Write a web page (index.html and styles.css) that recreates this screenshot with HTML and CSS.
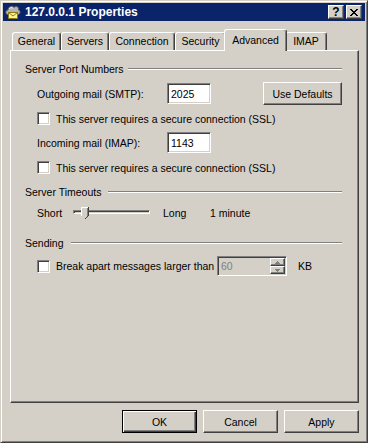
FILE: index.html
```html
<!DOCTYPE html>
<html>
<head>
<meta charset="utf-8">
<title>127.0.0.1 Properties</title>
<link rel="stylesheet" href="styles.css">
</head>
<body>
<div class="window">
  <div class="titlebar">
    <svg class="app-icon" width="16" height="16" viewBox="0 0 16 16">
      <path d="M2.5 10.5 C0 10 0.5 6 3 6 C3 2.5 7.5 1 9 3.5 C10.5 1.5 14.5 2.5 13.5 6 C16 6.5 15.5 10.5 13 10.5 Z" fill="#b4b4b4" stroke="#5a5a5a"/>
      <path d="M4 5 C5 3.5 7 3 8 4.5" fill="none" stroke="#e8e8e8"/>
      <rect x="3.5" y="8.5" width="9" height="6" fill="#fff48c" stroke="#8c7a14"/>
      <path d="M3.5 8.5 L8 12 L12.5 8.5" fill="none" stroke="#8c7a14"/>
    </svg>
    <span class="title">127.0.0.1 Properties</span>
    <div class="title-btns">
      <div class="tbtn help">?</div>
      <div class="tbtn close">
        <svg width="8" height="7" viewBox="0 0 8 7" shape-rendering="crispEdges">
          <path d="M0 0h2v1h-2zM6 0h2v1h-2zM1 1h2v1h-2zM5 1h2v1h-2zM2 2h4v1h-4zM3 3h2v1h-2zM2 4h4v1h-4zM1 5h2v1h-2zM5 5h2v1h-2zM0 6h2v1h-2zM6 6h2v1h-2z" fill="#000"/>
        </svg>
      </div>
    </div>
  </div>
  <div class="body">
    <div class="tabs">
      <div class="tab tab-general">General</div>
      <div class="tab tab-servers">Servers</div>
      <div class="tab tab-connection">Connection</div>
      <div class="tab tab-security">Security</div>
      <div class="tab tab-advanced active">Advanced</div>
      <div class="tab tab-imap">IMAP</div>
    </div>
    <div class="panel">
      <div class="group-head"><span>Server Port Numbers</span><div class="etch"></div></div>
      <div class="row row-out">
        <span class="field-label">Outgoing mail (SMTP):</span>
        <div class="textbox">2025</div>
        <div class="button defaults">Use Defaults</div>
      </div>
      <div class="row row-check1">
        <div class="checkbox"></div>
        <span>This server requires a secure connection (SSL)</span>
      </div>
      <div class="row row-in">
        <span class="field-label">Incoming mail (IMAP):</span>
        <div class="textbox">1143</div>
      </div>
      <div class="row row-check2">
        <div class="checkbox"></div>
        <span>This server requires a secure connection (SSL)</span>
      </div>

      <div class="group-head head-timeouts"><span>Server Timeouts</span><div class="etch"></div></div>
      <div class="row row-slider">
        <span class="short-label">Short</span>
        <div class="slider">
          <div class="track"></div>
          <svg class="thumb" width="8" height="12" viewBox="0 0 8 12" shape-rendering="crispEdges">
            <path d="M0 0h8v8l-4 4l-4 -4z" fill="#d4d0c8"/>
            <path d="M0 0h7v1h-6v8h-1z" fill="#fff"/>
            <path d="M7 0h1v9h-1z" fill="#404040"/>
            <path d="M6 1h1v8h-1z" fill="#808080"/>
            <path d="M0 9h1v1h1v1h1v1h1v-1h1v-1h1v-1h1v-1h1v1h-1v1h-1v1h-1v1h-2v-1h-1v-1h-1v-1h-1z" fill="#404040"/>
          </svg>
        </div>
        <span class="long-label">Long</span>
        <span>1 minute</span>
      </div>

      <div class="group-head head-sending"><span>Sending</span><div class="etch"></div></div>
      <div class="row row-spin">
        <div class="checkbox"></div>
        <span class="break-label">Break apart messages larger than</span>
        <div class="spinbox">
          <span class="spin-value">60</span>
          <div class="spin-btns">
            <div class="spin-btn">
              <svg width="5" height="3" viewBox="0 0 5 3" shape-rendering="crispEdges"><path d="M2 0h1v1h1v1h1v1h-5v-1h1v-1h1z" fill="#808080"/></svg>
            </div>
            <div class="spin-btn">
              <svg width="5" height="3" viewBox="0 0 5 3" shape-rendering="crispEdges"><path d="M0 0h5v1h-1v1h-1v1h-1v-1h-1v-1h-1z" fill="#808080"/></svg>
            </div>
          </div>
        </div>
        <span class="kb">KB</span>
      </div>
    </div>
    <div class="footer">
      <div class="button default">OK</div>
      <div class="button">Cancel</div>
      <div class="button">Apply</div>
    </div>
  </div>
</div>
</body>
</html>
```

FILE: styles.css
```css
* { box-sizing: border-box; }
html, body { margin: 0; padding: 0; }
body {
  width: 368px;
  height: 443px;
  overflow: hidden;
  background: #d4d0c8;
  font-family: "Liberation Sans", Arial, sans-serif;
  font-size: 10.5px;
  color: #000;
}

.window {
  width: 368px;
  height: 443px;
  background: #d4d0c8;
  border: 1px solid;
  border-color: #d4d0c8 #404040 #404040 #d4d0c8;
  box-shadow: inset 1px 1px #fff, inset -1px -1px #808080;
  padding: 2px;
  display: flex;
  flex-direction: column;
}

/* title bar */
.titlebar {
  height: 18px;
  flex: none;
  background: #0a246a;
  display: flex;
  align-items: center;
  padding: 0 3px 0 2px;
}
.app-icon { flex: none; display: block; }
.title {
  margin-left: 4px;
  color: #fff;
  font-weight: bold;
  font-size: 12px;
  white-space: nowrap;
}
.title-btns {
  margin-left: auto;
  display: flex;
  gap: 2px;
}
.tbtn {
  width: 16px;
  height: 14px;
  background: #d4d0c8;
  border: 1px solid;
  border-color: #fff #404040 #404040 #fff;
  box-shadow: inset -1px -1px #808080;
  display: flex;
  align-items: center;
  justify-content: center;
}
.help {
  font-weight: bold;
  font-size: 12px;
  line-height: 1;
  padding-bottom: 1px;
}
.close svg { display: block; }

/* body */
.body {
  flex: 1;
  display: flex;
  flex-direction: column;
  padding: 8px 6px 7px 7px;
}

/* tabs */
.tabs {
  height: 21px;
  flex: none;
  display: flex;
  align-items: flex-end;
  padding-left: 2px;
  position: relative;
  z-index: 1;
}
.tab {
  height: 18px;
  border: 1px solid;
  border-color: #fff #404040 transparent #fff;
  border-bottom: 0;
  border-radius: 3px 3px 0 0;
  box-shadow: inset -1px 0 #808080;
  background: #d4d0c8;
  display: flex;
  align-items: center;
  justify-content: center;
  white-space: nowrap;
  padding-bottom: 1px;
}
.tab-general { width: 49px; }
.tab-servers { width: 48px; }
.tab-connection { width: 66px; }
.tab-security { width: 51px; }
.tab-imap { width: 42px; }
.tab.active {
  width: 63px;
  height: 22px;
  margin: 0 -2px -1px;
  position: relative;
  z-index: 2;
  padding-bottom: 2px;
}

/* panel */
.panel {
  flex: 1;
  border: 1px solid;
  border-color: #fff #404040 #404040 #fff;
  box-shadow: inset -1px -1px #808080;
  padding: 11px 16px 0 14px;
  display: flex;
  flex-direction: column;
}

.group-head {
  height: 14px;
  display: flex;
  align-items: center;
  white-space: nowrap;
}
.etch {
  flex: 1;
  height: 2px;
  margin-left: 4px;
  border-top: 1px solid #808080;
  border-bottom: 1px solid #fff;
}
.head-timeouts { margin-top: 11px; }
.head-sending { margin-top: 14px; }
.head-timeouts .etch { margin-left: 7px; }
.head-sending .etch { margin-left: 7px; }

.row {
  display: flex;
  align-items: center;
  margin-left: 12px;
  white-space: nowrap;
}
.row-out { margin-top: 6px; height: 23px; }
.row-check1 { margin-top: 7px; height: 13px; }
.row-in { margin-top: 7px; height: 21px; }
.row-check2 { margin-top: 8px; height: 13px; }
.row-slider { margin-top: 5px; height: 18px; }
.row-spin { margin-top: 6px; height: 20px; }

.field-label { width: 130px; flex: none; }

.textbox {
  width: 44px;
  height: 21px;
  flex: none;
  background: #fff;
  border: 1px solid;
  border-color: #808080 #fff #fff #808080;
  box-shadow: inset 1px 1px #404040, inset -1px -1px #d4d0c8;
  padding: 0 3px;
  display: flex;
  align-items: center;
}

.button {
  background: #d4d0c8;
  border: 1px solid;
  border-color: #fff #404040 #404040 #fff;
  box-shadow: inset -1px -1px #808080;
  display: flex;
  align-items: center;
  justify-content: center;
  white-space: nowrap;
}
.defaults {
  margin-left: 52px;
  width: 82px;
  height: 23px;
}

.checkbox {
  width: 13px;
  height: 13px;
  flex: none;
  background: #fff;
  border: 1px solid;
  border-color: #808080 #fff #fff #808080;
  box-shadow: inset 1px 1px #404040, inset -1px -1px #d4d0c8;
  margin-right: 6px;
}

/* slider */
.short-label { width: 31px; flex: none; }
.slider {
  width: 87px;
  height: 18px;
  flex: none;
  position: relative;
  padding: 6px 5px 0;
}
.track {
  height: 4px;
  border: 1px solid;
  border-color: #808080 #fff #fff #808080;
  box-shadow: inset 1px 1px #404040, inset -1px -1px #d4d0c8;
  background: #d4d0c8;
}
.thumb {
  position: absolute;
  left: 13px;
  top: 3px;
  display: block;
}
.long-label { margin-left: 8px; width: 47px; flex: none; }

/* spin */
.break-label { width: 161px; flex: none; overflow: hidden; }
.spinbox {
  width: 70px;
  height: 20px;
  flex: none;
  border: 1px solid;
  border-color: #808080 #fff #fff #808080;
  box-shadow: inset 1px 1px #404040, inset -1px -1px #d4d0c8;
  padding: 1px;
  display: flex;
  align-items: center;
}
.spin-value {
  color: #808080;
  padding-left: 2px;
}
.spin-btns {
  margin-left: auto;
  width: 15px;
  height: 16px;
  display: flex;
  flex-direction: column;
}
.spin-btn {
  height: 8px;
  background: #d4d0c8;
  border: 1px solid;
  border-color: #fff #404040 #404040 #fff;
  box-shadow: inset -1px -1px #808080;
  display: flex;
  align-items: center;
  justify-content: center;
}
.spin-btn svg { display: block; }
.kb { margin-left: 11px; }

/* footer */
.footer {
  flex: none;
  margin-top: 7px;
  height: 23px;
  display: flex;
  justify-content: flex-end;
  gap: 6px;
}
.footer .button {
  width: 75px;
  height: 23px;
}
.footer .button.default {
  border: 1px solid #000;
  box-shadow: inset 1px 1px #fff, inset -1px -1px #404040, inset -2px -2px #808080;
}
```
